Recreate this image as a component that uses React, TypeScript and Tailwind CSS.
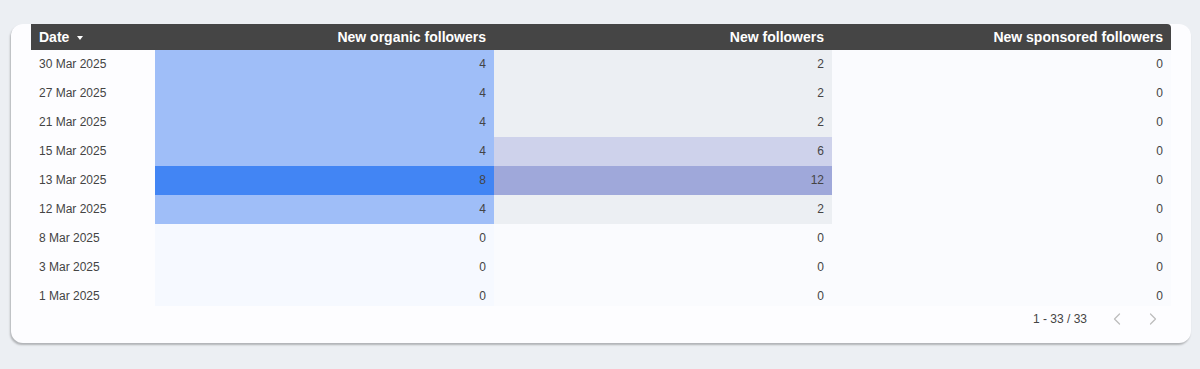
import React from 'react';
import { ChevronLeft, ChevronRight } from 'lucide-react';

interface Row {
  date: string;
  organic: number;
  total: number;
  sponsored: number;
}

const rows: Row[] = [
  { date: '30 Mar 2025', organic: 4, total: 2, sponsored: 0 },
  { date: '27 Mar 2025', organic: 4, total: 2, sponsored: 0 },
  { date: '21 Mar 2025', organic: 4, total: 2, sponsored: 0 },
  { date: '15 Mar 2025', organic: 4, total: 6, sponsored: 0 },
  { date: '13 Mar 2025', organic: 8, total: 12, sponsored: 0 },
  { date: '12 Mar 2025', organic: 4, total: 2, sponsored: 0 },
  { date: '8 Mar 2025', organic: 0, total: 0, sponsored: 0 },
  { date: '3 Mar 2025', organic: 0, total: 0, sponsored: 0 },
  { date: '1 Mar 2025', organic: 0, total: 0, sponsored: 0 },
];

// heatmap buckets, picked from the report
const organicBg = (v: number) =>
  v >= 8 ? 'bg-[#4285f4]' : v > 0 ? 'bg-[#9fbef8]' : 'bg-[#f6f9ff]';

const totalBg = (v: number) =>
  v >= 12 ? 'bg-[#9fa8da]' : v >= 6 ? 'bg-[#ced2eb]' : v > 0 ? 'bg-[#eceff3]' : 'bg-[#fafbfe]';

const grid = 'grid grid-cols-[124px_339px_338px_339px]';

export default function App() {
  return (
    <div
      className="w-[1200px] h-[369px] bg-[#eceff3] pt-[24px] pl-[11px]"
      style={{ fontFamily: '"Liberation Sans", Arial, sans-serif' }}
    >
      <div className="w-[1180px] h-[319px] bg-[#fdfdff] rounded-[12px] shadow-[-1px_2px_2px_rgba(0,0,0,0.25)] px-[20px] flex flex-col">
        {/* header */}
        <div className={`${grid} h-[26px] bg-[#454545] text-white text-[14px] font-bold rounded-tr-[4px]`}>
          <div className="flex items-center pl-[8px] gap-[8px]">
            <span>Date</span>
            <span className="w-0 h-0 border-l-[3px] border-r-[3px] border-t-[4px] border-l-transparent border-r-transparent border-t-white mt-[1px]" />
          </div>
          <div className="flex items-center justify-end pr-[8px]">New organic followers</div>
          <div className="flex items-center justify-end pr-[8px]">New followers</div>
          <div className="flex items-center justify-end pr-[8px]">New sponsored followers</div>
        </div>

        {/* body */}
        <div className="h-[256px] overflow-hidden text-[12px] text-[#444]">
          {rows.map((r) => (
            <div key={r.date} className={`${grid} h-[29px]`}>
              <div className="flex items-center pl-[8px] pb-[1px]">{r.date}</div>
              <div className={`flex items-center justify-end pr-[8px] pb-[1px] ${organicBg(r.organic)}`}>{r.organic}</div>
              <div className={`flex items-center justify-end pr-[8px] pb-[1px] ${totalBg(r.total)}`}>{r.total}</div>
              <div className="flex items-center justify-end pr-[8px] pb-[1px] bg-[#fafbfe]">{r.sponsored}</div>
            </div>
          ))}
        </div>

        {/* pagination */}
        <div className="flex items-center justify-end h-[26px] text-[12px] text-[#444]">
          <span className="mr-[20px]">1 - 33 / 33</span>
          <ChevronLeft className="w-[20px] h-[20px] text-[#bdbdbd] mr-[16px]" strokeWidth={1.5} />
          <ChevronRight className="w-[20px] h-[20px] text-[#bdbdbd] mr-[8px]" strokeWidth={1.5} />
        </div>
      </div>
    </div>
  );
}
